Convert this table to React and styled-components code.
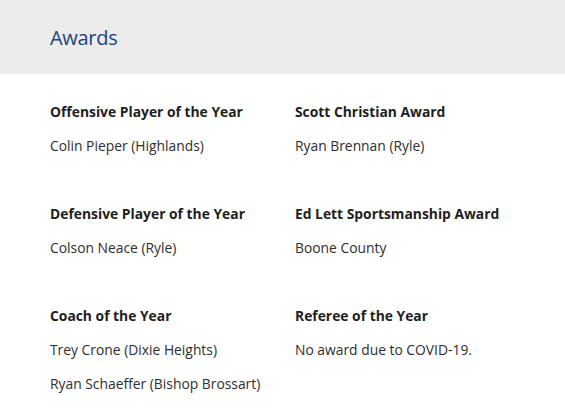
import React from 'react';
import styled, { createGlobalStyle } from 'styled-components';

const GlobalStyle = createGlobalStyle`
  body {
    margin: 0;
    background: #ffffff;
    font-family: "Open Sans", "Liberation Sans", sans-serif;
  }
`;

const Page = styled.div`
  width: 565px;
  min-height: 417px;
  background: #ffffff;
`;

const Header = styled.div`
  height: 74px;
  background: #ececec;
  display: flex;
  align-items: center;
  padding-left: 50px;
`;

const Title = styled.h2`
  margin: 0;
  font-size: 20px;
  font-weight: 400;
  letter-spacing: -0.3px;
  color: #1b4479;
`;

const Grid = styled.div`
  display: grid;
  grid-template-columns: 245px 245px;
  row-gap: 48px;
  padding: 28px 0 0 50px;
`;

const Award = styled.div`
  display: flex;
  flex-direction: column;
`;

const AwardName = styled.div`
  font-size: 13.85px;
  line-height: 20px;
  font-weight: 700;
  color: #1e1e1e;
`;

const Winner = styled.div`
  font-size: 13.85px;
  line-height: 20px;
  color: #2e2e2e;
  margin-top: 14px;
`;

const awards = [
  { name: 'Offensive Player of the Year', winners: ['Colin Pieper (Highlands)'] },
  { name: 'Scott Christian Award', winners: ['Ryan Brennan (Ryle)'] },
  { name: 'Defensive Player of the Year', winners: ['Colson Neace (Ryle)'] },
  { name: 'Ed Lett Sportsmanship Award', winners: ['Boone County'] },
  { name: 'Coach of the Year', winners: ['Trey Crone (Dixie Heights)', 'Ryan Schaeffer (Bishop Brossart)'] },
  { name: 'Referee of the Year', winners: ['No award due to COVID-19.'] },
];

export default function App() {
  return (
    <Page>
      <GlobalStyle />
      <Header>
        <Title>Awards</Title>
      </Header>
      <Grid>
        {awards.map((a) => (
          <Award key={a.name}>
            <AwardName>{a.name}</AwardName>
            {a.winners.map((w) => (
              <Winner key={w}>{w}</Winner>
            ))}
          </Award>
        ))}
      </Grid>
    </Page>
  );
}
